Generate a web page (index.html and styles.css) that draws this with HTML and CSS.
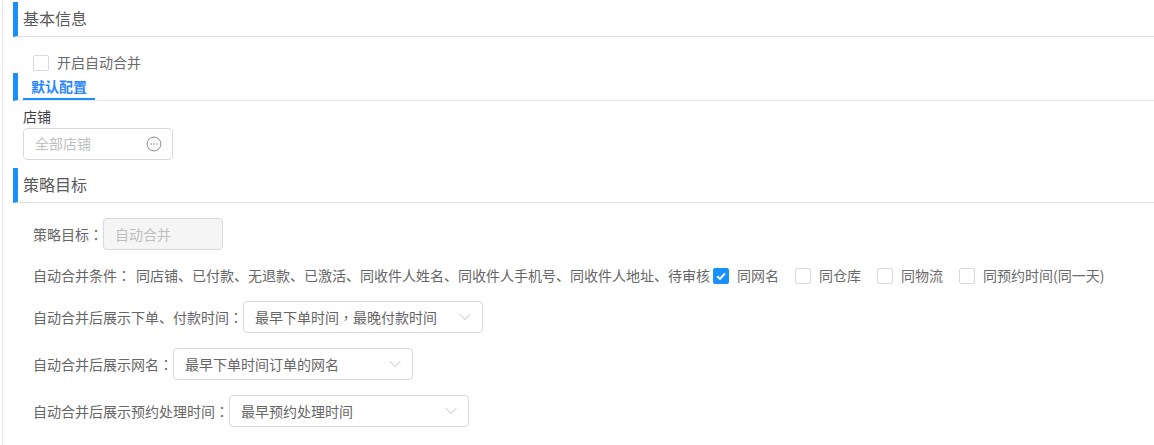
FILE: index.html
```html
<!DOCTYPE html>
<html lang="zh-CN">
<head>
<meta charset="utf-8">
<title>策略配置</title>
<link rel="stylesheet" href="styles.css">
</head>
<body>
<main class="page">
  <h2 class="section-title">基本信息</h2>
  <label class="check check-main"><span class="box"></span><span class="check-text">开启自动合并</span></label>

  <div class="tabs"><span class="tab">默认配置</span></div>
  <div class="field">
    <div class="field-label">店铺</div>
    <div class="input shop">
      <span class="placeholder">全部店铺</span>
      <svg class="more" width="16" height="16" viewBox="0 0 16 16" aria-hidden="true">
        <circle cx="8" cy="8" r="6.9" fill="none" stroke="#8c8c8c" stroke-width="1"/>
        <circle cx="5.2" cy="8" r="0.8" fill="#8c8c8c"/>
        <circle cx="8" cy="8" r="0.8" fill="#8c8c8c"/>
        <circle cx="10.8" cy="8" r="0.8" fill="#8c8c8c"/>
      </svg>
    </div>
  </div>

  <h2 class="section-title second">策略目标</h2>
  <div class="form">
    <div class="row row-target">
      <span class="label">策略目标<span class="punct" lang="zh-TW">：</span></span>
      <div class="input disabled"><span class="placeholder">自动合并</span></div>
    </div>
    <div class="row row-cond">
      <span class="label">自动合并条件<span class="punct" lang="zh-TW">：</span></span>
      <span class="cond-text">同店铺、已付款、无退款、已激活、同收件人姓名、同收件人手机号、同收件人地址、待审核</span>
      <label class="check"><span class="box checked"><svg width="12" height="12" viewBox="0 0 12 12" aria-hidden="true"><path d="M2.2 6.2 L5 8.9 L9.9 3.4" fill="none" stroke="#fff" stroke-width="2"/></svg></span><span class="check-text">同网名</span></label>
      <label class="check"><span class="box"></span><span class="check-text">同仓库</span></label>
      <label class="check"><span class="box"></span><span class="check-text">同物流</span></label>
      <label class="check"><span class="box"></span><span class="check-text">同预约时间(同一天)</span></label>
    </div>
    <div class="row row-select">
      <span class="label">自动合并后展示下单、付款时间<span class="punct" lang="zh-TW">：</span></span>
      <div class="input select"><span>最早下单时间<span class="punct" lang="zh-TW">，</span>最晚付款时间</span><svg class="arrow" width="12" height="8" viewBox="0 0 12 8" aria-hidden="true"><path d="M0.8 1.2 L6 6.6 L11.2 1.2" fill="none" stroke="#bfbfbf" stroke-width="1"/></svg></div>
    </div>
    <div class="row row-select">
      <span class="label">自动合并后展示网名<span class="punct" lang="zh-TW">：</span></span>
      <div class="input select"><span>最早下单时间订单的网名</span><svg class="arrow" width="12" height="8" viewBox="0 0 12 8" aria-hidden="true"><path d="M0.8 1.2 L6 6.6 L11.2 1.2" fill="none" stroke="#bfbfbf" stroke-width="1"/></svg></div>
    </div>
    <div class="row row-select">
      <span class="label">自动合并后展示预约处理时间<span class="punct" lang="zh-TW">：</span></span>
      <div class="input select"><span>最早预约处理时间</span><svg class="arrow" width="12" height="8" viewBox="0 0 12 8" aria-hidden="true"><path d="M0.8 1.2 L6 6.6 L11.2 1.2" fill="none" stroke="#bfbfbf" stroke-width="1"/></svg></div>
    </div>
  </div>
</main>
</body>
</html>
```
FILE: styles.css
```css
* { box-sizing: border-box; }
html, body { margin: 0; padding: 0; background: #fff; }
body {
  width: 1154px;
  height: 445px;
  overflow: hidden;
  font-family: "Noto Sans CJK SC", "Liberation Sans", sans-serif;
  font-size: 14px;
  color: #666;
}
.page {
  margin-left: 2px;
  height: 445px;
  padding: 2px 0 0 10px;
  border-left: 1px solid #e8e8e8;
}
.punct { font-family: "Noto Sans CJK TC", sans-serif; }
.section-title {
  margin: 0;
  height: 35px;
  padding-left: 5px;
  border-left: 5px solid #1890ff;
  border-bottom: 1px solid #e0e0e0;
  font-size: 16px;
  line-height: 33px;
  font-weight: 400;
  color: #595959;
}
.section-title.second { margin-top: 8px; }
.check { display: inline-flex; align-items: center; }
.check-main { display: flex; margin: 17px 0 0 20px; height: 18px; }
.box {
  width: 16px;
  height: 16px;
  flex: none;
  display: flex;
  align-items: center;
  justify-content: center;
  border: 1px solid #d9d9d9;
  border-radius: 2px;
  background: #fff;
}
.box.checked { background: #1890ff; border-color: #1890ff; }
.check-text { margin-left: 8px; padding-bottom: 2px; line-height: 18px; color: #6a6a6a; }
.tabs {
  margin-top: 1px;
  height: 28px;
  padding-left: 5px;
  border-left: 5px solid #1890ff;
  border-bottom: 1px solid #e8e8e8;
}
.tab {
  display: block;
  width: 72px;
  height: 27px;
  padding-top: 2px;
  border-bottom: 2px solid #1890ff;
  text-align: center;
  font-size: 14px;
  line-height: 22px;
  font-weight: 700;
  color: #2b87ff;
}
.field { padding: 6px 0 0 10px; }
.field-label { height: 21px; font-size: 14px; line-height: 18px; color: #404040; }
.input {
  display: flex;
  align-items: center;
  justify-content: space-between;
  height: 32px;
  padding: 0 11px;
  border: 1px solid #d9d9d9;
  border-radius: 4px;
  background: #fff;
}
.shop { width: 150px; padding-right: 10px; }
.shop .placeholder { padding-bottom: 2px; }
.placeholder { color: #bfbfbf; }
.more { flex: none; }
.form { padding-left: 20px; }
.row { display: flex; align-items: center; }
.label { flex: none; }
.row-target { margin-top: 15px; }
.input.disabled { width: 120px; background: #f5f5f5; }
.row-cond { margin-top: 17px; height: 18px; line-height: 18px; }
.row-cond .label, .cond-text { padding-bottom: 2px; }
.cond-text { margin-left: 5px; flex: none; }
.row-cond .check { margin-left: 16px; }
.row-cond .check:first-of-type { margin-left: 3px; }
.row-select { height: 32px; margin-top: 15px; }
.row-cond + .row-select { margin-top: 16px; }
.select { width: 240px; }
.arrow { flex: none; }
```
